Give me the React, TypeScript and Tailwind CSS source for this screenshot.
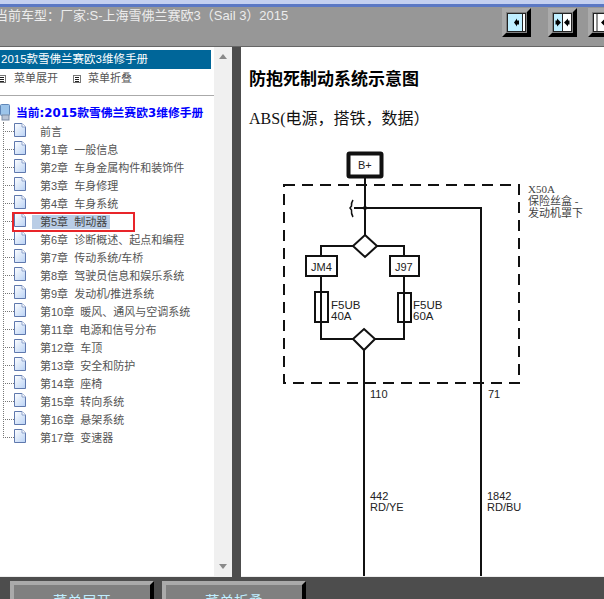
import React from "react";

const F = "[font-family:'Liberation_Sans','Noto_Sans_CJK_SC',sans-serif]";

const chapters = [
  "前言",
  "第1章  一般信息",
  "第2章  车身金属构件和装饰件",
  "第3章  车身修理",
  "第4章  车身系统",
  "第5章  制动器",
  "第6章  诊断概述、起点和编程",
  "第7章  传动系统/车桥",
  "第8章  驾驶员信息和娱乐系统",
  "第9章  发动机/推进系统",
  "第10章  暖风、通风与空调系统",
  "第11章  电源和信号分布",
  "第12章  车顶",
  "第13章  安全和防护",
  "第14章  座椅",
  "第15章  转向系统",
  "第16章  悬架系统",
  "第17章  变速器",
];

function PageIcon() {
  return (
    <svg width="12" height="14" viewBox="0 0 12 14" className="shrink-0 mb-[2px]">
      <defs>
        <linearGradient id="pg" x1="0" y1="0" x2="1" y2="1">
          <stop offset="0" stopColor="#ffffff" />
          <stop offset="1" stopColor="#b9d2f5" />
        </linearGradient>
      </defs>
      <path d="M0.5 0.5H8L11.5 4V13.5H0.5Z" fill="url(#pg)" stroke="#5f78ad" />
      <path d="M8 0.5V4H11.5" fill="#fff" stroke="#8ea3cc" />
    </svg>
  );
}

function MenuIcon() {
  return (
    <svg width="8" height="8" viewBox="0 0 8 8" className="shrink-0">
      <rect x="0.5" y="0.5" width="7" height="7" fill="#fff" stroke="#777" />
      <path d="M2 2.5H6M2 4.5H6M2 6.5H6" stroke="#222" strokeWidth="1" />
    </svg>
  );
}

function Toggle({ kind }: { kind: 0 | 1 | 2 }) {
  return (
    <div className="w-[29px] h-[29px] shrink-0 border-[4px] border-t-[#aaaaaa] border-l-[#aaaaaa] border-r-black border-b-black bg-[#808080] flex items-center justify-center">
      <svg width="19" height="19" viewBox="0 0 19 19">
        <rect x="0.5" y="0.5" width="18" height="18" fill="#ffffff" stroke="#222" />
        {kind === 0 && <rect x="1" y="1" width="14" height="17" fill="#bfeeff" />}
        {kind === 0 && <path d="M15.5 1V18" stroke="#222" />}
        {kind === 0 && <path d="M7 9.5L10 5.5V7.5H12V11.5H10V13.5Z" fill="#000" />}
        {kind === 1 && <rect x="1" y="1" width="8" height="17" fill="#bfeeff" />}
        {kind === 1 && <path d="M9.5 1V18" stroke="#222" />}
        {kind === 1 && <path d="M8 9.5L4 5.5V7.5H2.5V11.5H4V13.5Z" fill="#000" />}
        {kind === 1 && <path d="M11 9.5L15 5.5V7.5H16.5V11.5H15V13.5Z" fill="#000" />}
        {kind === 2 && <path d="M4 1V18" stroke="#222" />}
        {kind === 2 && <path d="M8 9.5L12 5.5V7.5H14V11.5H12V13.5Z" fill="#000" />}
      </svg>
    </div>
  );
}

function Diagram() {
  const t = "'Liberation Sans', sans-serif";
  const s = "'Liberation Serif', 'Noto Sans CJK SC', serif";
  return (
    <svg width="363" height="448" viewBox="241 129 363 448" className="block">
      <g fill="none" stroke="#111" strokeWidth="2">
        <rect x="348.5" y="153.5" width="33" height="23" rx="1" strokeWidth="4" />
        <rect x="284" y="185" width="235" height="198" strokeDasharray="11 7" />
        <path d="M365 178V235" />
        <path d="M354 208H481V577" />
        <path d="M353 200Q351 203 351.5 206L350 208L351.5 210Q351 214 353 217" strokeWidth="1.5" />
        <path d="M365 235L377 246L365 257L353 246Z" />
        <path d="M353 246H321V256M377 246H404V256" />
        <rect x="306" y="256" width="31" height="20" />
        <rect x="390" y="256" width="29" height="20" />
        <path d="M321 276V339H353M404 276V339H375" />
        <rect x="315" y="292" width="13" height="30" fill="#fff" />
        <rect x="398" y="293" width="13" height="29" fill="#fff" />
        <path d="M321 292V322M404 293V322" />
        <path d="M364 329L375 339L364 350L353 339Z" fill="#fff" />
        <path d="M364 350V577" />
      </g>
      <circle cx="365" cy="208" r="2" fill="#111" />
      <g fontFamily={t} fill="#222" fontSize="11">
        <text x="358" y="169">B+</text>
        <text x="311" y="271">JM4</text>
        <text x="395" y="271">J97</text>
        <text x="331" y="309" fontSize="11.5">F5UB</text>
        <text x="331" y="320" fontSize="11.5">40A</text>
        <text x="413" y="309" fontSize="11.5">F5UB</text>
        <text x="413" y="320" fontSize="11.5">60A</text>
        <text x="370" y="398">110</text>
        <text x="488" y="398">71</text>
        <text x="370" y="500">442</text>
        <text x="370" y="511">RD/YE</text>
        <text x="487" y="500">1842</text>
        <text x="487" y="511">RD/BU</text>
      </g>
      <g fontFamily={s} fill="#444" fontSize="11">
        <text x="528" y="193">X50A</text>
        <text x="528" y="205">保险丝盒 -</text>
        <text x="528" y="217">发动机罩下</text>
      </g>
    </svg>
  );
}

export default function App() {
  return (
    <div className={`w-[604px] h-[599px] overflow-hidden flex flex-col bg-[#4d4d4d] ${F}`}>
      <div className="h-[4px] bg-[#c4d0f0] shrink-0" />
      <div className="h-[3px] bg-[#5b78c4] shrink-0" />
      <header className="h-[40px] shrink-0 bg-[#979797] border-b border-[#666666] flex items-start overflow-hidden">
        <div className="flex-1 min-w-0 -ml-[5px] text-[13px] leading-[17px] text-[#ececec] whitespace-nowrap">
          当前车型：厂家:S-上海雪佛兰赛欧3（Sail 3）2015
        </div>
        <div className="flex shrink-0 mt-[1px] -mr-[13px]">
          <Toggle kind={0} />
          <div className="ml-[17px]"><Toggle kind={1} /></div>
          <div className="ml-[11px]"><Toggle kind={2} /></div>
        </div>
      </header>

      <main className="flex-1 min-h-0 flex">
        <aside className="w-[214px] shrink-0 bg-white pt-[3px] flex flex-col border-b border-[#eeeeee]">
          <div className="h-[19px] w-[211px] bg-[#006699] text-white text-[11.5px] leading-[19px] pl-[1px] whitespace-nowrap">
            2015款雪佛兰赛欧3维修手册
          </div>
          <div className="h-[26px] pb-[7px] flex items-center text-[11px] text-[#555555] whitespace-nowrap">
            <span className="-ml-[2px]"><MenuIcon /></span>
            <span className="ml-[8px]">菜单展开</span>
            <span className="ml-[15px]"><MenuIcon /></span>
            <span className="ml-[7px]">菜单折叠</span>
          </div>
          <div className="h-px bg-[#aaaaaa]" />
          <div className="relative pt-[8px]">
            <div className="h-[18px] flex items-center whitespace-nowrap">
              <svg width="12" height="18" viewBox="0 0 12 18" className="shrink-0 -ml-[1px]">
                <rect x="1.5" y="0.5" width="9" height="11" rx="1" fill="#9cc4ea" stroke="#5f86b8" />
                <rect x="3" y="11" width="7" height="5" fill="#b9c4d6" stroke="#7d8ba3" />
              </svg>
              <span className="ml-[5px] pt-[2px] text-[11.8px] font-bold text-[#0000ff] [font-family:'DejaVu_Sans','Noto_Sans_CJK_SC',sans-serif]">当前:2015款雪佛兰赛欧3维修手册</span>
            </div>
            <div className="absolute left-[3px] top-[26px] h-[314px] border-l border-dotted border-[#777777]" />
            {chapters.map((c, i) => (
              <div key={c} className="h-[18px] flex items-center whitespace-nowrap">
                <span className="ml-[3px] w-[11px] shrink-0 border-t border-dotted border-[#777777]" />
                <PageIcon />
                <span
                  className={
                    i === 5
                      ? "ml-[6px] pl-[8px] pr-[2px] w-[78px] h-[14px] mt-[1px] leading-[14px] text-[11px] bg-[#b9cde6] text-[#444444] whitespace-pre"
                      : "ml-[14px] pt-[2px] text-[11px] text-[#555555] whitespace-pre"
                  }
                >
                  {c}
                </span>
              </div>
            ))}
            <div className="absolute left-[12px] top-[116px] w-[123px] h-[20px] border-2 border-[#e8252a]" />
          </div>
        </aside>

        <div className="w-[18px] shrink-0 bg-[#f0f0f0] border-b border-[#eeeeee] flex flex-col items-center justify-between pt-[7px] pb-[7px]">
          <svg width="8" height="5" viewBox="0 0 8 5"><path d="M4 0L8 5H0Z" fill="#8a8a8a" /></svg>
          <svg width="8" height="5" viewBox="0 0 8 5"><path d="M4 5L8 0H0Z" fill="#8a8a8a" /></svg>
        </div>

        <div className="w-[9px] shrink-0 bg-[#4d4d4d]" />

        <section className="flex-1 min-w-0 bg-white border-b border-[#eeeeee] overflow-hidden">
          <h1 className="pl-[8px] pt-[22px] h-[43px] text-[17px] leading-[21px] font-bold text-black whitespace-nowrap [font-family:'Liberation_Serif','Noto_Sans_CJK_SC',serif]">
            防抱死制动系统示意图
          </h1>
          <p className="pl-[8px] pt-[18px] h-[39px] text-[16px] leading-[22px] text-[#111111] whitespace-nowrap [font-family:'Liberation_Serif','Noto_Sans_CJK_SC',serif]">
            ABS(电源，搭铁，数据）
          </p>
          <Diagram />
        </section>
      </main>

      <footer className="h-[22px] shrink-0 bg-[#4d4d4d] pt-[4px] pl-[10px] flex gap-[8px] overflow-hidden">
        <div className="w-[144px] h-[40px] shrink-0 bg-[#808080] border-[4px] border-t-[#aaaaaa] border-l-[#aaaaaa] border-r-black border-b-black text-center text-[14.5px] leading-[34px] text-[#bfeeff]">
          菜单展开
        </div>
        <div className="w-[144px] h-[40px] shrink-0 bg-[#808080] border-[4px] border-t-[#aaaaaa] border-l-[#aaaaaa] border-r-black border-b-black text-center text-[14.5px] leading-[34px] text-[#bfeeff]">
          菜单折叠
        </div>
      </footer>
    </div>
  );
}
